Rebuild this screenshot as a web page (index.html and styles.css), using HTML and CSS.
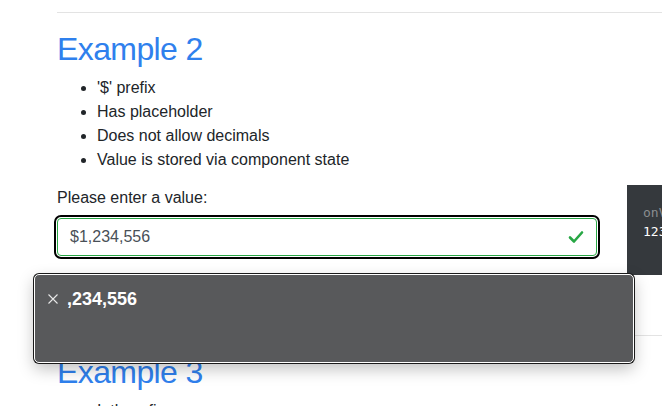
FILE: index.html
```html
<!DOCTYPE html>
<html>
<head>
<meta charset="utf-8">
<link rel="stylesheet" href="styles.css">
</head>
<body>
<div class="page">
  <section class="example">
    <hr class="rule">
    <h2 class="title">Example 2</h2>
    <ul class="features">
      <li>'$' prefix</li>
      <li>Has placeholder</li>
      <li>Does not allow decimals</li>
      <li>Value is stored via component state</li>
    </ul>
    <div class="row">
      <div class="form-col">
        <label class="label">Please enter a value:</label>
        <div class="field">
          <span class="value">$1,234,556</span>
          <svg class="check" width="16" height="14" viewBox="0 0 16 14"><path d="M2 7.5 L6 11.5 L14 2.5" fill="none" stroke="#28a745" stroke-width="2.6" stroke-linecap="round" stroke-linejoin="round"/></svg>
        </div>
      </div>
      <div class="output">
        <div class="out-key">onValueChange:</div>
        <div class="out-val">1234556</div>
      </div>
    </div>
  </section>
  <section class="example">
    <hr class="rule">
    <h2 class="title">Example 3</h2>
    <ul class="features">
      <li>Intl config</li>
    </ul>
  </section>
</div>
<div class="popup">
  <svg class="close" width="10" height="10" viewBox="0 0 10 10"><path d="M0.5 0.5 L9.5 9.5 M9.5 0.5 L0.5 9.5" stroke="#e8e8e8" stroke-width="1.1" fill="none"/></svg>
  <span class="suggest">,234,556</span>
</div>
</body>
</html>
```
FILE: styles.css
```css
html, body {
  margin: 0;
  padding: 0;
  overflow: hidden;
  background: #fff;
}
body {
  width: 662px;
  height: 406px;
  position: relative;
  font-family: "Liberation Sans", Arial, sans-serif;
  color: #212529;
  font-size: 16px;
  line-height: 24px;
}
.page {
  padding-left: 57px;
  width: 900px;
}
.example {
  display: flex;
  flex-direction: column;
}
.rule {
  margin: 12px 0 0 0;
  border: 0;
  border-top: 1px solid #e3e3e3;
  height: 0;
}
.title {
  margin: 17px 0 8px 0;
  font-size: 32px;
  line-height: 38px;
  font-weight: 500;
  color: #2f80ed;
  letter-spacing: -0.6px;
}
.features {
  margin: 0 0 13px 0;
  padding-left: 40px;
}
.row {
  display: flex;
  gap: 30px;
  height: 90px;
  margin-bottom: 48px;
}
.form-col {
  width: 540px;
  display: flex;
  flex-direction: column;
}
.label {
  margin-top: 1px;
  margin-bottom: 8px;
}
.field {
  height: 36px;
  border: 1px solid #28a745;
  border-radius: 4px;
  outline: 2px solid #000;
  outline-offset: 1px;
  display: flex;
  align-items: center;
  justify-content: space-between;
  padding: 0 12px;
  color: #495057;
}
.output {
  width: 200px;
  background: #35393d;
  padding: 18px 16px;
  font-family: "DejaVu Sans Mono", monospace;
  font-size: 13px;
  line-height: 19px;
}
.out-key {
  color: #8a8d90;
}
.out-val {
  color: #fff;
}
.popup {
  position: absolute;
  left: 34px;
  top: 274px;
  width: 600px;
  height: 89px;
  background: #58595b;
  border: 1px solid #fff;
  border-radius: 5px;
  box-shadow: 0 0 0 1px #1a1a1a, 0 6px 16px rgba(0,0,0,0.25);
  display: flex;
  align-items: flex-start;
  padding: 12px 13px;
  box-sizing: border-box;
  gap: 9px;
}
.close {
  margin-top: 7px;
  flex-shrink: 0;
}
.suggest {
  color: #fff;
  font-weight: bold;
  font-size: 18px;
  line-height: 24px;
}
```
